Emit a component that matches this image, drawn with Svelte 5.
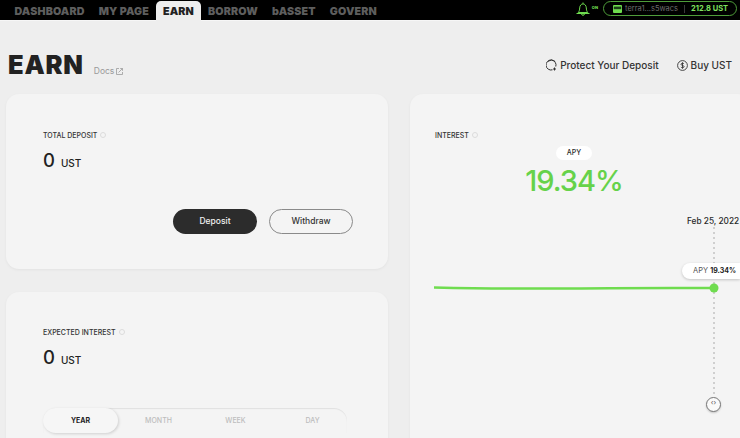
<script>
  const navItems = ['DASHBOARD', 'MY PAGE', 'EARN', 'BORROW', 'bASSET', 'GOVERN'];
  const tabs = ['YEAR', 'MONTH', 'WEEK', 'DAY'];
</script>

<div class="page">
  <header class="topbar">
    <nav class="nav">
      {#each navItems as item}
        <span class="nav-item" class:active={item === 'EARN'}>{item}</span>
      {/each}
    </nav>
    <div class="status">
      <svg class="bell" width="16" height="16" viewBox="0 0 16 16" fill="none" stroke="#6fdc4f" stroke-width="1">
        <path d="M8 1.500v1.200M3.200 11.500c1.300-1.400 1.400-3 1.500-4.600C4.800 4.600 6.200 2.900 8 2.900s3.200 1.700 3.300 4c.1 1.600.2 3.200 1.500 4.600zM1.500 12.500h13M6.500 13c.2 1.700 2.800 1.700 3 0"/>
      </svg>
      <span class="on">ON</span>
      <div class="wallet">
        <svg class="wallet-icon" width="9" height="8" viewBox="0 0 9 8">
          <rect width="9" height="8" rx="1" fill="#6fdc4f"/>
          <rect x="0.800" y="1.600" width="7.400" height="2.600" fill="#1c3d18"/>
        </svg>
        <span class="address">terra1...s5wacs</span>
        <span class="divider"></span>
        <span class="balance">212.8 UST</span>
      </div>
    </div>
  </header>

  <section class="title-row">
    <div class="title-left">
      <h1>EARN</h1>
      <span class="docs">Docs
        <svg width="7" height="7" viewBox="0 0 7 7" fill="none" stroke="#9a9a9a" stroke-width="0.800">
          <path d="M3 .5H.5v6h6V4M2.500 4.500 6.500.5M4.200.5h2.300v2.300"/>
        </svg>
      </span>
    </div>
    <div class="title-actions">
      <span class="action">
        <svg width="11" height="12" viewBox="0 0 11 12" fill="none" stroke="#333" stroke-width="1">
          <path d="M6.500 10.800A5 5 0 1 1 9.800 7.500M1.800 2.400 5.500.9l3.700 1.500M8.500 8.500v3M7 10h3"/>
        </svg>
        Protect Your Deposit
      </span>
      <span class="action">
        <svg width="11" height="11" viewBox="0 0 11 11" fill="none" stroke="#333" stroke-width="0.900">
          <circle cx="5.500" cy="5.500" r="4.900"/>
          <path d="M7 3.900C6.600 3 4 3 4 4.300c0 1.500 3.100.8 3.100 2.400C7.100 8 4.400 8 3.900 7M5.500 2.300v6.400"/>
        </svg>
        Buy UST
      </span>
    </div>
  </section>

  <main class="columns">
    <div class="left">
      <section class="card deposit">
        <div class="label">TOTAL DEPOSIT <i class="info"></i></div>
        <div class="amount">0 <small>UST</small></div>
        <div class="buttons">
          <span class="btn primary">Deposit</span>
          <span class="btn outline">Withdraw</span>
        </div>
      </section>
      <section class="card expected">
        <div class="label">EXPECTED INTEREST <i class="info"></i></div>
        <div class="amount">0 <small>UST</small></div>
        <div class="tabs">
          {#each tabs as tab}
            <span class="tab" class:selected={tab === 'YEAR'}>{tab}</span>
          {/each}
        </div>
      </section>
    </div>

    <section class="card interest">
      <div class="label">INTEREST <i class="info"></i></div>
      <div class="apy">
        <span class="apy-tag">APY</span>
        <span class="apy-value">19.34%</span>
      </div>
      <div class="chart">
        <svg class="chart-svg" width="330" height="200" viewBox="0 0 330 200" fill="none">
          <path d="M304 10V178" stroke="#aaa" stroke-width="1" stroke-dasharray="2 3"/>
          <path d="M24 70.500C70 71.500 100 71.800 140 71.500S240 70.600 304 71" stroke="#6fdc4f" stroke-width="2.500"/>
          <circle cx="304" cy="71" r="4.500" fill="#6fdc4f"/>
        </svg>
        <span class="date">Feb 25, 2022</span>
        <span class="tip">APY <b>19.34%</b></span>
        <span class="handle">‹›</span>
      </div>
    </section>
  </main>
</div>

<style>
  :global(body) {
    margin: 0;
    background: #eeeeee;
    overflow: hidden;
  }
  .page {
    width: 740px;
    height: 438px;
    overflow: hidden;
    font-family: Inter, "Open Sans", sans-serif;
    color: #2a2a2a;
  }
  .topbar {
    height: 20px;
    background: #000;
    display: flex;
    justify-content: space-between;
    align-items: flex-end;
    border-bottom: 1px solid #f6f6f6;
  }
  .nav {
    display: flex;
    padding-left: 7.500px;
    height: 19px;
  }
  .nav-item {
    font-weight: 900;
    font-size: 10.700px;
    letter-spacing: 0.150px;
    color: #5e5e5e;
    padding: 0 7px;
    line-height: 21px;
  }
  .nav-item.active {
    background: #eeeeee;
    color: #222;
    border-radius: 5px 5px 0 0;
    height: 20px;
  }
  .status {
    display: flex;
    align-items: center;
    height: 20px;
    padding-right: 3px;
  }
  .bell { margin-right: 1px; margin-top: -2px; }
  .on {
    font-size: 4px;
    font-weight: 800;
    color: #6fdc4f;
    margin-right: 5px;
    margin-top: -6px;
  }
  .wallet {
    width: 134px;
    height: 15px;
    box-sizing: border-box;
    border: 1px solid #4f9d3a;
    border-radius: 8px;
    display: flex;
    align-items: center;
    padding-left: 9px;
    margin-top: -3px;
  }
  .wallet-icon { margin-right: 3px; }
  .address {
    font-size: 7.500px;
    color: #6d6d6d;
  }
  .divider {
    width: 1px;
    height: 8px;
    background: #3a3a3a;
    margin: 0 6px 0 6px;
  }
  .balance {
    font-size: 7.500px;
    font-weight: 700;
    color: #7fe05f;
  }
  .title-row {
    display: flex;
    justify-content: space-between;
    padding: 29px 8px 0 8px;
    height: 43px;
  }
  .title-left {
    display: flex;
    align-items: flex-start;
  }
  h1 {
    margin: 0;
    font-size: 25.500px;
    line-height: 30px;
    font-weight: 900;
    letter-spacing: 0.800px;
    color: #222;
  }
  .docs {
    margin: 16px 0 0 10px;
    font-size: 8.500px;
    color: #9a9a9a;
    display: flex;
    align-items: center;
    gap: 2px;
  }
  .title-actions {
    display: flex;
    gap: 18px;
    padding-top: 8px;
  }
  .action {
    display: flex;
    align-items: center;
    gap: 3px;
    font-size: 10px;
    font-weight: 500;
    height: 14px;
    color: #333;
  }
  .columns {
    display: grid;
    grid-template-columns: 382px 340px;
    column-gap: 22px;
    padding-left: 6px;
    margin-top: 1px;
  }
  .left {
    display: flex;
    flex-direction: column;
    gap: 23px;
  }
  .card {
    background: #f4f4f4;
    border-radius: 13px;
    box-shadow: 0 1px 3px rgba(0, 0, 0, 0.05);
    box-sizing: border-box;
  }
  .deposit {
    height: 175px;
    padding: 37px 35px 0 37px;
  }
  .expected {
    height: 190px;
    padding: 36px 35px 0 37px;
  }
  .interest {
    height: 360px;
    padding: 37px 0 0 25px;
    position: relative;
  }
  .label {
    font-size: 7px;
    line-height: 9px;
    font-weight: 500;
    color: #333;
    display: flex;
    align-items: center;
    gap: 3px;
  }
  .info {
    width: 6px;
    height: 6px;
    border: 1px solid #dcdcdc;
    border-radius: 50%;
    box-sizing: border-box;
    margin-top: -2px;
  }
  .amount {
    font-size: 18.500px;
    line-height: 22px;
    margin-top: 9px;
    font-weight: 500;
    color: #222;
  }
  .amount small {
    font-size: 10px;
    font-weight: 500;
    margin-left: 1px;
  }
  .buttons {
    display: flex;
    justify-content: flex-end;
    gap: 12px;
    margin-top: 35px;
  }
  .btn {
    width: 84px;
    height: 25px;
    padding-bottom: 1px;
    border-radius: 13px;
    box-sizing: border-box;
    display: flex;
    align-items: center;
    justify-content: center;
    font-size: 8.500px;
    font-weight: 500;
  }
  .primary {
    background: #2c2c2c;
    color: #f0f0f0;
  }
  .outline {
    border: 1px solid #8a8a8a;
    color: #333;
  }
  .tabs {
    display: flex;
    margin-top: 37px;
    width: 304px;
    height: 25px;
    border-radius: 13px 13px 0 0;
    box-shadow: inset 0 1px 1px rgba(0, 0, 0, 0.08);
  }
  .tab {
    flex: 0 0 77px;
    display: flex;
    align-items: center;
    justify-content: center;
    font-size: 7px;
    font-weight: 500;
    color: #bdbdbd;
  }
  .tab.selected {
    flex-basis: 75px;
    margin-right: 2px;
    color: #222;
    font-weight: 700;
    background: #f6f6f6;
    border-radius: 13px;
    box-shadow: 1px 1px 3px rgba(0, 0, 0, 0.15);
  }
  .apy {
    display: flex;
    flex-direction: column;
    align-items: center;
    width: 278px;
    margin-top: 6px;
  }
  .apy-tag {
    background: #fff;
    border-radius: 7px;
    font-size: 7px;
    font-weight: 500;
    line-height: 14px;
    padding: 0 11px;
  }
  .apy-value {
    font-size: 29px;
    line-height: 36px;
    font-weight: 500;
    letter-spacing: -1px;
    color: #66d24a;
    margin-top: 3px;
  }
  .chart {
    position: absolute;
    left: 0;
    top: 123px;
    width: 330px;
    height: 200px;
  }
  .chart-svg { display: block; }
  .date {
    position: absolute;
    left: 277px;
    top: -1px;
    font-size: 8.300px;
    font-weight: 500;
    white-space: nowrap;
    line-height: 10px;
  }
  .tip {
    position: absolute;
    left: 272px;
    top: 46px;
    width: 58px;
    height: 16px;
    background: #fff;
    border-radius: 8px 0 0 8px;
    box-shadow: 0 1px 3px rgba(0, 0, 0, 0.2);
    font-size: 7.500px;
    line-height: 16px;
    padding-left: 11px;
    box-sizing: border-box;
    color: #555;
    white-space: nowrap;
  }
  .tip b { color: #222; font-size: 7px; }
  .handle {
    position: absolute;
    left: 296px;
    top: 180px;
    width: 15px;
    height: 15px;
    box-sizing: border-box;
    border: 1.500px solid #777;
    border-radius: 50%;
    background: #fafafa;
    box-shadow: 0 1px 2px rgba(0, 0, 0, 0.2);
    font-size: 7px;
    line-height: 10px;
    text-align: center;
    color: #555;
  }
</style>
